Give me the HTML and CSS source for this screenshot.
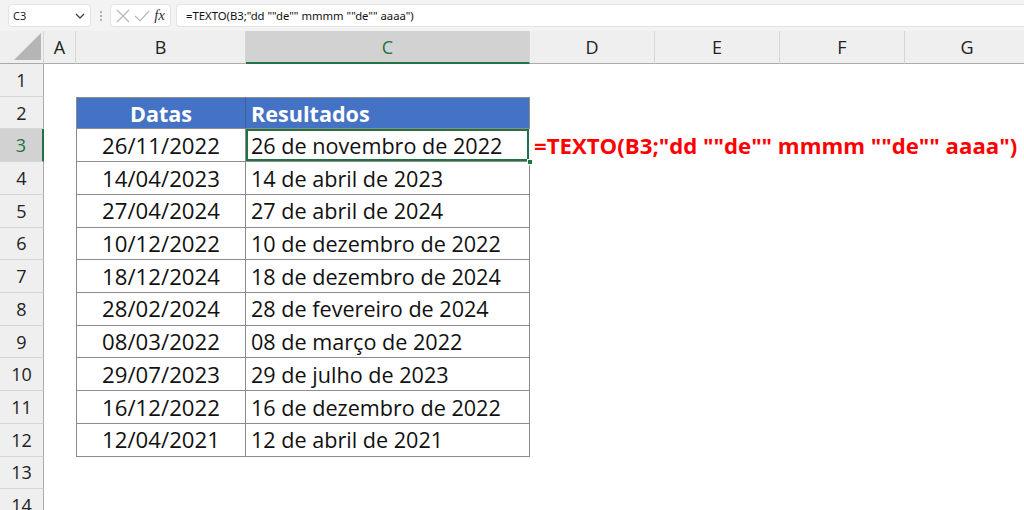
FILE: index.html
```html
<!DOCTYPE html>
<html lang="pt">
<head>
<meta charset="utf-8">
<title>TEXTO</title>
<link rel="stylesheet" href="styles.css">
</head>
<body>
<div class="fbar">
  <div class="namebox">
    <span class="nb-text">C3</span>
    <svg class="chev" width="10" height="6" viewBox="0 0 10 6"><path d="M1 1 L5 5 L9 1" fill="none" stroke="#444" stroke-width="1.3"/></svg>
  </div>
  <div class="vdots"><span></span><span></span><span></span></div>
  <div class="btns">
    <svg width="14" height="14" viewBox="0 0 14 14"><path d="M1 1 L13 13 M13 1 L1 13" stroke="#b8b8b8" stroke-width="1.2"/></svg>
    <svg width="16" height="14" viewBox="0 0 16 14"><path d="M1 7 L6 12 L15 2" fill="none" stroke="#b8b8b8" stroke-width="1.2"/></svg>
    <span class="fx">fx</span>
  </div>
  <div class="finput">=TEXTO(B3;"dd ""de"" mmmm ""de"" aaaa")</div>
</div>
<div class="sheet">
  <div class="row hdr">
    <div class="corner"><svg width="27" height="27" viewBox="0 0 27 27"><path d="M0 27 L27 27 L27 0 Z" fill="#b5b5b5"/></svg></div>
    <div class="ch">A</div><div class="ch">B</div><div class="ch sel">C</div><div class="ch">D</div><div class="ch">E</div><div class="ch">F</div><div class="ch">G</div>
  </div>
  <div class="row"><div class="rh">1</div><div></div><div></div><div></div><div></div><div></div><div></div><div></div></div>
  <div class="row"><div class="rh">2</div><div></div><div class="t tl th thb">Datas</div><div class="t th thc">Resultados</div><div></div><div></div><div></div><div></div></div>
  <div class="row"><div class="rh rsel">3</div><div></div><div class="t tl tb">26/11/2022</div><div class="t tc active">26 de novembro de 2022</div><div class="note">=TEXTO(B3;"dd ""de"" mmmm ""de"" aaaa")</div><div></div><div></div><div></div></div>
  <div class="row"><div class="rh">4</div><div></div><div class="t tl tb">14/04/2023</div><div class="t tc">14 de abril de 2023</div><div></div><div></div><div></div><div></div></div>
  <div class="row"><div class="rh">5</div><div></div><div class="t tl tb">27/04/2024</div><div class="t tc">27 de abril de 2024</div><div></div><div></div><div></div><div></div></div>
  <div class="row"><div class="rh">6</div><div></div><div class="t tl tb">10/12/2022</div><div class="t tc">10 de dezembro de 2022</div><div></div><div></div><div></div><div></div></div>
  <div class="row"><div class="rh">7</div><div></div><div class="t tl tb">18/12/2024</div><div class="t tc">18 de dezembro de 2024</div><div></div><div></div><div></div><div></div></div>
  <div class="row"><div class="rh">8</div><div></div><div class="t tl tb">28/02/2024</div><div class="t tc">28 de fevereiro de 2024</div><div></div><div></div><div></div><div></div></div>
  <div class="row"><div class="rh">9</div><div></div><div class="t tl tb">08/03/2022</div><div class="t tc">08 de março de 2022</div><div></div><div></div><div></div><div></div></div>
  <div class="row"><div class="rh">10</div><div></div><div class="t tl tb">29/07/2023</div><div class="t tc">29 de julho de 2023</div><div></div><div></div><div></div><div></div></div>
  <div class="row"><div class="rh">11</div><div></div><div class="t tl tb">16/12/2022</div><div class="t tc">16 de dezembro de 2022</div><div></div><div></div><div></div><div></div></div>
  <div class="row"><div class="rh">12</div><div></div><div class="t tl tb">12/04/2021</div><div class="t tc">12 de abril de 2021</div><div></div><div></div><div></div><div></div></div>
  <div class="row"><div class="rh">13</div><div></div><div></div><div></div><div></div><div></div><div></div><div></div></div>
  <div class="row"><div class="rh">14</div><div></div><div></div><div></div><div></div><div></div><div></div><div></div></div>
</div>
</body>
</html>
```

FILE: styles.css
```css
html, body {
  margin: 0;
  padding: 0;
  background: #ffffff;
  overflow: hidden;
  width: 1024px;
  height: 510px;
  font-family: "Open Sans", "Noto Sans", sans-serif;
  color: #1a1a1a;
}

.fbar {
  height: 31px;
  box-sizing: border-box;
  background: #f3f3f3;
  display: flex;
  align-items: center;
  padding: 0 0 0 8px;
}

.namebox {
  width: 83px;
  height: 23px;
  box-sizing: border-box;
  background: #fff;
  border: 1px solid #e3e3e3;
  border-radius: 4px;
  display: flex;
  align-items: center;
  justify-content: space-between;
  padding: 0 5px 0 4px;
  font-family: "Noto Sans", "Open Sans", sans-serif;
  font-size: 11px;
  color: #222;
}

.vdots {
  width: 19px;
  display: flex;
  flex-direction: column;
  align-items: center;
  gap: 2px;
}
.vdots span {
  width: 2px;
  height: 2px;
  background: #9a9a9a;
  border-radius: 1px;
}

.btns {
  width: 61px;
  height: 23px;
  box-sizing: border-box;
  background: #fff;
  border: 1px solid #e3e3e3;
  border-radius: 4px;
  display: flex;
  align-items: center;
  justify-content: space-between;
  padding: 0 5px;
}

.fx {
  font-family: "Liberation Serif", "DejaVu Serif", serif;
  font-style: italic;
  font-size: 15px;
  color: #333;
  line-height: 1;
}

.finput {
  flex: 1;
  margin-left: 5px;
  height: 23px;
  box-sizing: border-box;
  background: #fff;
  border: 1px solid #e3e3e3;
  border-right: none;
  border-radius: 4px 0 0 4px;
  display: flex;
  align-items: center;
  padding-left: 9px;
  font-family: "Noto Sans", "Open Sans", sans-serif;
  font-size: 11.3px;
  color: #111;
  white-space: nowrap;
}

.sheet {
  display: flex;
  flex-direction: column;
}

.row {
  display: grid;
  grid-template-columns: 44px 32px 170px 284px 125px 125px 125px 125px;
  height: 32.727px;
}

.row > div {
  box-sizing: border-box;
  min-width: 0;
}

.row.hdr {
  height: 33px;
  background: #efefef;
}

.corner {
  border-right: 1px solid #d6d6d6;
  border-bottom: 1px solid #ababab;
  display: flex;
  align-items: flex-end;
  justify-content: flex-end;
  padding: 0 2px 3px 0;
}

.ch {
  border-right: 1px solid #d6d6d6;
  border-bottom: 1px solid #ababab;
  display: flex;
  align-items: center;
  justify-content: center;
  font-size: 18px;
  color: #222;
}

.ch.sel {
  background: #d2d2d2;
  border-bottom: 2px solid #217346;
  color: #217346;
}

.rh {
  background: #efefef;
  border-right: 1px solid #ababab;
  border-bottom: 1px solid #d6d6d6;
  display: flex;
  align-items: center;
  justify-content: center;
  font-size: 18px;
  color: #222;
}

.rh.rsel {
  background: #d2d2d2;
  border-right: 2px solid #217346;
  color: #217346;
}

.t {
  border-right: 1px solid #8c8c8c;
  border-bottom: 1px solid #8c8c8c;
  display: flex;
  align-items: center;
  font-size: 21.6px;
  color: #111;
  white-space: nowrap;
}

.tl { border-left: 1px solid #8c8c8c; }

.th {
  background: #4472c4;
  border-top: 1px solid #8c8c8c;
  color: #fff;
  font-weight: 700;
}

.thb { border-right-color: #3c5f9e; justify-content: center; }
.thc { padding-left: 5px; }

.tb { justify-content: center; font-size: 22.2px; }
.tc { padding-left: 5px; }

.active {
  position: relative;
  box-shadow: inset 0 0 0 2px #217346;
  border-right-color: transparent;
}
.active::after {
  content: "";
  position: absolute;
  right: -4px;
  bottom: -4px;
  width: 6px;
  height: 6px;
  background: #217346;
  border: 1px solid #fff;
  box-sizing: border-box;
}

.note {
  display: flex;
  align-items: center;
  padding-left: 4px;
  white-space: nowrap;
  overflow: visible;
  color: #ff0000;
  font-weight: 700;
  font-size: 22.2px;
}
```
